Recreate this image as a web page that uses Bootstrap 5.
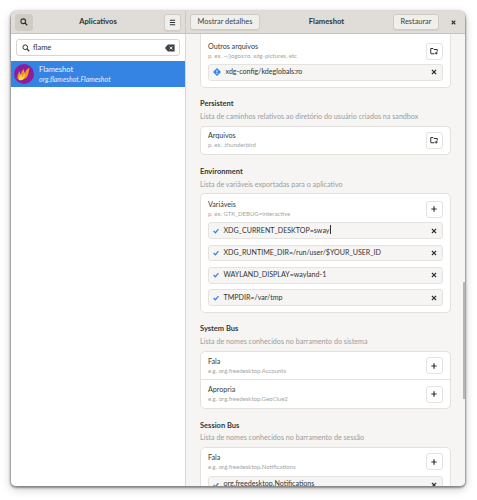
<!DOCTYPE html>
<html lang="pt">
<head>
<meta charset="utf-8">
<title>Flameshot</title>
<link rel="stylesheet" href="https://cdn.jsdelivr.net/npm/bootstrap@5.3.0/dist/css/bootstrap.min.css">
<style>
html,body{height:100%;background:#fff;overflow:hidden}
body{font-family:Lato,"Noto Sans",sans-serif;font-size:7.5px;color:#2e3436;line-height:1.2;padding:11px 12px 14px 11px}
.win{height:475px;border-radius:6px 6px 5px 5px;overflow:hidden;box-shadow:0 1px 2px 1px rgba(0,0,0,.38),0 3px 10px rgba(0,0,0,.22);background:#fff}
.hdr{height:23px;flex:none;background:#e0dcd7;border-bottom:1px solid #c7c2bc;font-size:7.65px}
.hdr-left{width:175px;padding:0 4px;border-right:1px solid #cdc8c2}
.hdr-right{padding:0 4px}
.ttl{font-weight:700;color:#2e3436}
.hbtn{height:16.5px;padding:0 8px;font-size:7.4px;line-height:1;color:#3a3f41;background:#f1efec;border:1px solid #cfcac4;border-radius:3px;box-shadow:0 1px 0 rgba(0,0,0,.05)}
.hbtn:hover{background:#f1efec}
.hbtn-a{width:70px;padding:0}
.hbtn-b{width:46px;padding:0}
.hend{gap:12px;margin-right:5px}
.hsq{width:17.5px;height:17px;padding:0;display:flex;align-items:center;justify-content:center}
.hsq-on{background:#cfcbc5;border-color:#cfcbc5;box-shadow:none}
.side{width:175px;flex:none;background:#fff;border-right:1px solid #dcdad6}
.srch{margin:5px;height:17px;background:#fff;border:1px solid #d9d6d1;border-radius:3px;padding:0 4px 0 5px;font-size:7.5px;color:#2e3436;gap:3px}
.srow{height:26px;background:#3584e4;color:#fff;padding-left:3px;gap:5px}
.snm{font-size:7.5px;line-height:10px;color:#f3f7fd}
.sid{font-size:7px;line-height:9px;font-style:italic;color:#e6effb}
.logo{width:20px;height:20px;flex:none}
.main{min-height:0}
.pane{background:#f6f5f4;position:relative;min-width:0}
.flow{padding:0 14px}
.sec{margin:0;font-size:7.5px;font-weight:700;color:#33383a;line-height:10px}
.dsc{font-size:7.15px;color:#9a9c9c;line-height:10px;margin:2.8px 0 3.7px}
.box{background:#fff;border:1px solid #e3e1de;border-radius:5px}
.box-cut{border-top:0;border-radius:0 0 5px 5px;margin-bottom:11.5px}
.box-per{height:29px;padding:0 7px;margin-bottom:12px}
.box-env{margin-bottom:11.6px}
.box-sys{margin-bottom:11.4px}
.rw-first{padding:8px 7px 4px}
.rw-env{padding:6px 7px 4px}
.rw-ses{padding:4.5px 7px 5.5px}
.rw-sys{height:28.2px;padding:0 7px}
.rw-sep{border-bottom:1px solid #e3e1de}
.lnm{font-size:7.15px;line-height:10px;color:#33383a}
.lsb{font-size:6px;line-height:8px;color:#a3a5a5}
.sq{width:17.5px;height:17px;background:#fff;border:1px solid #e5e3e0;border-radius:3px;flex:none;padding:0;display:flex;align-items:center;justify-content:center}
.chip{height:16.8px;background:#f6f5f4;border:1px solid #e5e3e0;border-radius:3px;margin:0 7px 5.6px;padding:0 5px 0 4px;font-size:7.1px;color:#2e3436;gap:4.5px}
.chip-end{margin-bottom:6px}
.chip span{flex:1;white-space:nowrap}
.caret{display:inline-block;border-left:1px solid #2e3436;height:9px;vertical-align:-1px}
.scrl{position:absolute;right:0;top:248px;width:2.5px;height:117px;background:#b8b6b3}
</style>
</head>
<body>
<svg width="0" height="0" class="position-absolute">
  <defs>
    <symbol id="i-x" viewBox="0 0 10 10"><path d="M1.500 1.500l7 7M8.500 1.500l-7 7" stroke="#2e3436" stroke-width="2.200"/></symbol>
    <symbol id="i-ok" viewBox="0 0 10 10"><path d="M1 5l3 3 5-6" fill="none" stroke="#3584e4" stroke-width="2.200"/></symbol>
    <symbol id="i-add" viewBox="0 0 10 10"><path d="M5 .5v9M.5 5h9" stroke="#2e3436" stroke-width="2"/></symbol>
    <symbol id="i-dir" viewBox="0 0 16 16"><path d="M1.500 13V3h4.500l2 2h6.500v4M9 13.500H1.500" fill="none" stroke="#2e3436" stroke-width="2"/><path d="M12.500 9.500v5.500M9.800 12.300h5.500" stroke="#2e3436" stroke-width="1.900"/></symbol>
  </defs>
</svg>
<div class="win d-flex flex-column">
  <div class="hdr d-flex">
    <div class="hdr-left d-flex align-items-center justify-content-between flex-none">
      <button class="btn hbtn hsq hsq-on"><svg width="8" height="8" viewBox="0 0 16 16"><circle cx="6.5" cy="6.5" r="4.7" fill="none" stroke="#2e3436" stroke-width="2.2"/><path d="M10 10l4.5 4.5" stroke="#2e3436" stroke-width="2.6"/></svg></button>
      <span class="ttl">Aplicativos</span>
      <button class="btn hbtn hsq"><svg width="7" height="7" viewBox="0 0 16 16"><path d="M2 3h12M2 8h12M2 13h12" stroke="#2e3436" stroke-width="2.4"/></svg></button>
    </div>
    <div class="hdr-right d-flex align-items-center flex-grow-1 justify-content-between">
      <button class="btn hbtn hbtn-a">Mostrar detalhes</button>
      <span class="ttl">Flameshot</span>
      <div class="d-flex align-items-center hend">
        <button class="btn hbtn hbtn-b">Restaurar</button>
        <svg width="5" height="5"><use href="#i-x"/></svg>
      </div>
    </div>
  </div>
  <div class="d-flex flex-grow-1 main">
    <div class="side">
      <div class="srch d-flex align-items-center">
        <svg width="8" height="8" viewBox="0 0 16 16"><circle cx="6.5" cy="6.5" r="4.7" fill="none" stroke="#2e3436" stroke-width="2"/><path d="M10 10l4.5 4.5" stroke="#2e3436" stroke-width="2.2"/></svg>
        <span class="flex-grow-1">flame</span>
        <svg width="10" height="8" viewBox="0 0 14 11"><path d="M4 0.5h9.5v10H4L0 5.5z" fill="#3d4244"/><path d="M6.5 3.5l4 4M10.5 3.5l-4 4" stroke="#fff" stroke-width="1.3"/></svg>
      </div>
      <div class="srow d-flex align-items-center">
        <svg class="logo" viewBox="0 0 20 20"><circle cx="10" cy="10" r="10" fill="#8a1fa0"/><path d="M3.500 15c-.5-3 .5-6 2.500-8-.2 2 .3 2.800 1 3.400C7.300 8 8.300 6 10 5c-.4 2 .1 3 1 4 .5-2 2-4.200 4.500-5.500-.6 4-1 7-2.500 9.500-1.500 2.200-7 4-9.500 2z" fill="#f7941d"/><path d="M5 16c0-2.500 1-4.500 2.500-5.500 0 2 .8 2.500 1.500 2.800.1-1.500.7-2.800 1.800-3.600 0 2-.3 4-1.300 5.300-1.200 1.300-3.500 1.700-4.500 1z" fill="#fde047"/></svg>
        <div>
          <div class="snm">Flameshot</div>
          <div class="sid">org.flameshot.Flameshot</div>
        </div>
      </div>
    </div>
    <div class="pane flex-grow-1 overflow-hidden">
      <div class="flow">
        <div class="box box-cut">
          <div class="d-flex align-items-center justify-content-between rw-first">
            <div><div class="lnm">Outros arquivos</div><div class="lsb">p. ex. ~/jogos:ro, xdg-pictures, etc</div></div>
            <div class="sq"><svg width="8" height="8"><use href="#i-dir"/></svg></div>
          </div>
          <div class="chip chip-end d-flex align-items-center">
            <svg width="8" height="8" viewBox="0 0 10 10"><path d="M5 0l5 5-5 5-5-5z" fill="#3584e4"/><path d="M4.400 2.500h1.200v3H4.400zM4.400 6.300h1.200v1.200H4.400z" fill="#fff"/></svg>
            <span>xdg-config/kdeglobals:ro</span>
            <svg width="6" height="6"><use href="#i-x"/></svg>
          </div>
        </div>
        <h6 class="sec">Persistent</h6>
        <p class="dsc">Lista de caminhos relativos ao diretório do usuário criados na sandbox</p>
        <div class="box box-per d-flex align-items-center justify-content-between">
          <div><div class="lnm">Arquivos</div><div class="lsb">p. ex. .thunderbird</div></div>
          <div class="sq"><svg width="8" height="8"><use href="#i-dir"/></svg></div>
        </div>
        <h6 class="sec">Environment</h6>
        <p class="dsc">Lista de variáveis exportadas para o aplicativo</p>
        <div class="box box-env">
          <div class="d-flex align-items-center justify-content-between rw-env">
            <div><div class="lnm">Variáveis</div><div class="lsb">p. ex. GTK_DEBUG=interactive</div></div>
            <div class="sq"><svg width="6" height="6"><use href="#i-add"/></svg></div>
          </div>
          <div class="chip d-flex align-items-center"><svg width="6" height="6"><use href="#i-ok"/></svg><span>XDG_CURRENT_DESKTOP=sway<i class="caret"></i></span><svg width="6" height="6"><use href="#i-x"/></svg></div>
          <div class="chip d-flex align-items-center"><svg width="6" height="6"><use href="#i-ok"/></svg><span>XDG_RUNTIME_DIR=/run/user/$YOUR_USER_ID</span><svg width="6" height="6"><use href="#i-x"/></svg></div>
          <div class="chip d-flex align-items-center"><svg width="6" height="6"><use href="#i-ok"/></svg><span>WAYLAND_DISPLAY=wayland-1</span><svg width="6" height="6"><use href="#i-x"/></svg></div>
          <div class="chip d-flex align-items-center"><svg width="6" height="6"><use href="#i-ok"/></svg><span>TMPDIR=/var/tmp</span><svg width="6" height="6"><use href="#i-x"/></svg></div>
        </div>
        <h6 class="sec">System Bus</h6>
        <p class="dsc">Lista de nomes conhecidos no barramento do sistema</p>
        <div class="box box-sys">
          <div class="d-flex align-items-center justify-content-between rw-sys rw-sep">
            <div><div class="lnm">Fala</div><div class="lsb">e.g. org.freedesktop.Accounts</div></div>
            <div class="sq"><svg width="6" height="6"><use href="#i-add"/></svg></div>
          </div>
          <div class="d-flex align-items-center justify-content-between rw-sys">
            <div><div class="lnm">Apropria</div><div class="lsb">e.g. org.freedesktop.GeoClue2</div></div>
            <div class="sq"><svg width="6" height="6"><use href="#i-add"/></svg></div>
          </div>
        </div>
        <h6 class="sec">Session Bus</h6>
        <p class="dsc">Lista de nomes conhecidos no barramento de sessão</p>
        <div class="box">
          <div class="d-flex align-items-center justify-content-between rw-ses">
            <div><div class="lnm">Fala</div><div class="lsb">e.g. org.freedesktop.Notifications</div></div>
            <div class="sq"><svg width="6" height="6"><use href="#i-add"/></svg></div>
          </div>
          <div class="chip d-flex align-items-center"><svg width="6" height="6"><use href="#i-ok"/></svg><span>org.freedesktop.Notifications</span><svg width="6" height="6"><use href="#i-x"/></svg></div>
        </div>
      </div>
      <div class="scrl"></div>
    </div>
  </div>
</div>
<script src="https://cdn.jsdelivr.net/npm/bootstrap@5.3.0/dist/js/bootstrap.bundle.min.js"></script>
</body>
</html>
